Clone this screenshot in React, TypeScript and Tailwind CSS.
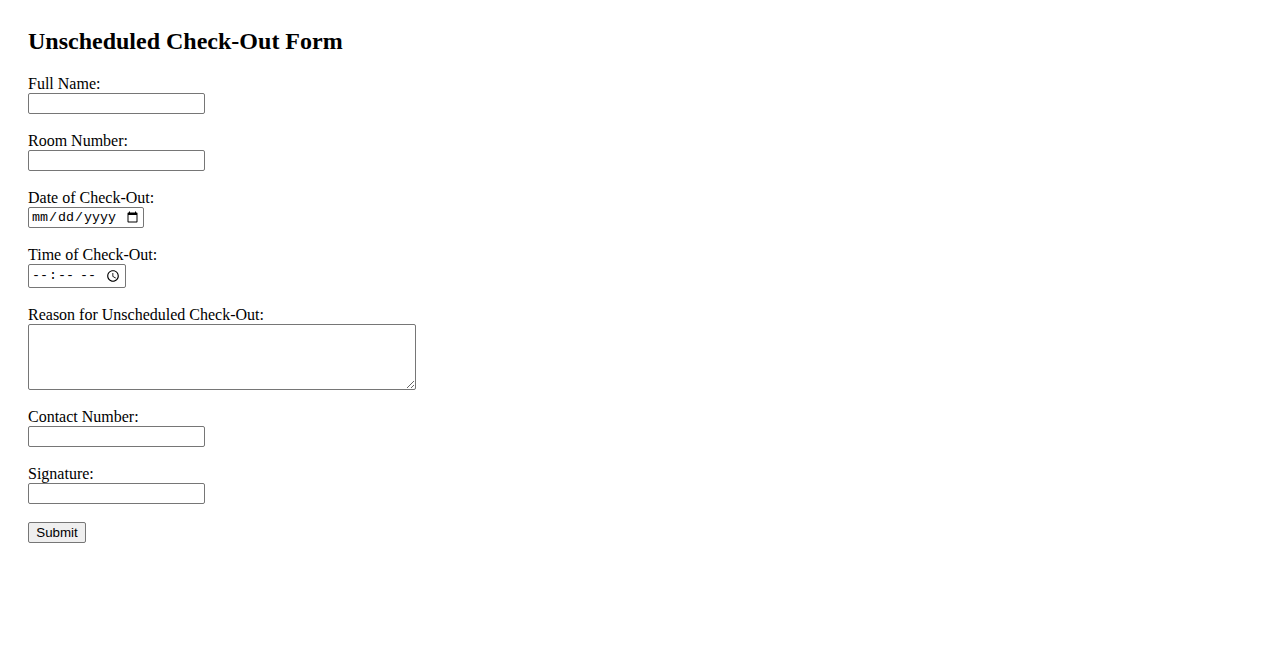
import React from 'react';

const field = 'block h-[21px] w-[177px] rounded-[2px] border border-[#767676] bg-white px-[2px] py-[1px] text-[13.33px]';

function Field({ label, children }: { label: string; children: React.ReactNode }) {
  return (
    <div className="mb-[17.6px]">
      <label className="block leading-[18.4px]">{label}</label>
      {children}
    </div>
  );
}

export default function App() {
  return (
    <div className="min-h-[650px] bg-white pt-[28px] pl-[28px] text-black text-base" style={{ fontFamily: '"Liberation Serif", "Times New Roman", serif' }}>
      <h2 className="mb-[19.2px] text-[24px] font-bold leading-[27.6px]">Unscheduled Check-Out Form</h2>
      <form className="flex flex-col items-start" onSubmit={e => e.preventDefault()}>
        <Field label="Full Name:">
          <input type="text" className={field} />
        </Field>
        <Field label="Room Number:">
          <input type="text" className={field} />
        </Field>
        <Field label="Date of Check-Out:">
          <input
            type="date"
            className="block h-[21px] w-[116px] rounded-[2px] border border-[#767676] bg-white px-[2px] text-[13.33px]"
            style={{ fontFamily: '"Liberation Mono", "DejaVu Sans Mono", monospace' }}
          />
        </Field>
        <Field label="Time of Check-Out:">
          <input
            type="time"
            className="block h-[24px] w-[98px] rounded-[2px] border border-[#767676] bg-white px-[2px] text-[13.33px]"
            style={{ fontFamily: '"Liberation Mono", "DejaVu Sans Mono", monospace' }}
          />
        </Field>
        <Field label="Reason for Unscheduled Check-Out:">
          <textarea className="block h-[66px] w-[388px] rounded-[2px] border border-[#767676] bg-white p-[2px] text-[13.33px]" />
        </Field>
        <Field label="Contact Number:">
          <input type="tel" className={field} />
        </Field>
        <Field label="Signature:">
          <input type="text" className={field} />
        </Field>
        <button
          type="submit"
          className="h-[21px] w-[58px] rounded-[2px] border border-[#767676] bg-[#efefef] text-[13.33px] leading-none"
          style={{ fontFamily: '"Liberation Sans", Arial, sans-serif' }}
        >
          Submit
        </button>
      </form>
    </div>
  );
}
